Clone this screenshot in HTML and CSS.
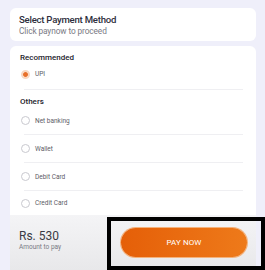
FILE: index.html
```html
<!DOCTYPE html>
<html>
<head>
<meta charset="utf-8">
<link rel="stylesheet" href="styles.css">
</head>
<body>
<div class="page">
  <div class="card head">
    <div class="title">Select Payment Method</div>
    <div class="sub">Click paynow to proceed</div>
  </div>
  <div class="card main">
    <div class="sec-title rec">Recommended</div>
    <div class="row upi"><span class="radio on"></span><span class="lbl">UPI</span></div>
    <div class="divider first"></div>
    <div class="sec-title oth">Others</div>
    <div class="row"><span class="radio"></span><span class="lbl">Net banking</span></div>
    <div class="divider"></div>
    <div class="row"><span class="radio"></span><span class="lbl">Wallet</span></div>
    <div class="divider"></div>
    <div class="row"><span class="radio"></span><span class="lbl">Debit Card</span></div>
    <div class="divider"></div>
    <div class="row last"><span class="radio"></span><span class="lbl">Credit Card</span></div>
    <div class="footer">
      <div class="amount">
        <div class="rs">Rs. 530</div>
        <div class="amt-lbl">Amount to pay</div>
      </div>
      <button class="pay">PAY NOW</button>
    </div>
  </div>
</div>
<div class="frame"></div>
</body>
</html>
```
FILE: styles.css
```css
html, body {
  margin: 0;
  padding: 0;
}
body {
  width: 265px;
  height: 270px;
  overflow: hidden;
  background: #efeffa;
  font-family: "Roboto", "Open Sans", sans-serif;
  position: relative;
}
.page {
  padding: 8px 9px 0 10px;
  display: flex;
  flex-direction: column;
  gap: 5px;
}
.card {
  background: #ffffff;
  border-radius: 6px;
}
.head {
  height: 33px;
  box-sizing: border-box;
  padding: 5px 9px 0 9px;
}
.title {
  font-size: 9.6px;
  font-weight: 500;
  color: #2e2e3c;
  line-height: 13px;
  letter-spacing: -0.25px;
}
.sub {
  font-size: 8.3px;
  color: #7a7a84;
  line-height: 10px;
  letter-spacing: -0.1px;
}
.main {
  height: 224px;
  border-radius: 6px 6px 0 0;
  display: flex;
  flex-direction: column;
  overflow: hidden;
}
.sec-title {
  font-size: 8px;
  font-weight: 500;
  color: #23232c;
  padding-left: 10px;
  line-height: 11px;
}
.rec {
  margin-top: 6px;
}
.oth {
  margin-top: 7px;
  height: 10px;
  line-height: 10px;
}
.row {
  height: 27px;
  display: flex;
  align-items: center;
  padding-left: 11px;
  gap: 5px;
}
.row.upi {
  height: 22px;
}
.row.last {
  height: 24px;
}
.divider {
  height: 1px;
  background: #efeff2;
  margin: 0 13px 0 14px;
}
.divider.first {
  margin-top: 4px;
}
.radio {
  width: 9px;
  height: 9px;
  box-sizing: border-box;
  border: 1px solid #c9c9cf;
  border-radius: 50%;
  background: #fff;
}
.radio.on {
  border: 2px solid #f8d8c2;
  background: radial-gradient(circle, #e8702a 0 2.2px, #fbe6d8 2.6px);
}
.lbl {
  font-size: 6.5px;
  color: #5c5c66;
}
.footer {
  margin-top: auto;
  height: 55px;
  background: linear-gradient(#f4f4f6, #e8e8ea);
  display: flex;
  align-items: flex-start;
  justify-content: space-between;
  padding: 0 9px 0 9px;
}
.amount {
  padding-top: 15px;
}
.rs {
  font-size: 12px;
  color: #3a3a44;
  line-height: 13px;
}
.amt-lbl {
  font-size: 6.5px;
  color: #7a7a84;
  line-height: 9px;
}
.pay {
  margin-top: 13px;
  width: 126px;
  height: 29px;
  border: none;
  border-radius: 15px;
  background: linear-gradient(90deg, #e55f08, #ee7a1a);
  box-shadow: 0 0 0 1px #f4b27c;
  color: #fff;
  font-family: "Roboto", "Open Sans", sans-serif;
  font-size: 8px;
  letter-spacing: 0.1px;
  padding: 0;
}
.frame {
  position: absolute;
  left: 107px;
  top: 217px;
  width: 158px;
  height: 53px;
  box-sizing: border-box;
  border: 4px solid #000;
  pointer-events: none;
}
```
